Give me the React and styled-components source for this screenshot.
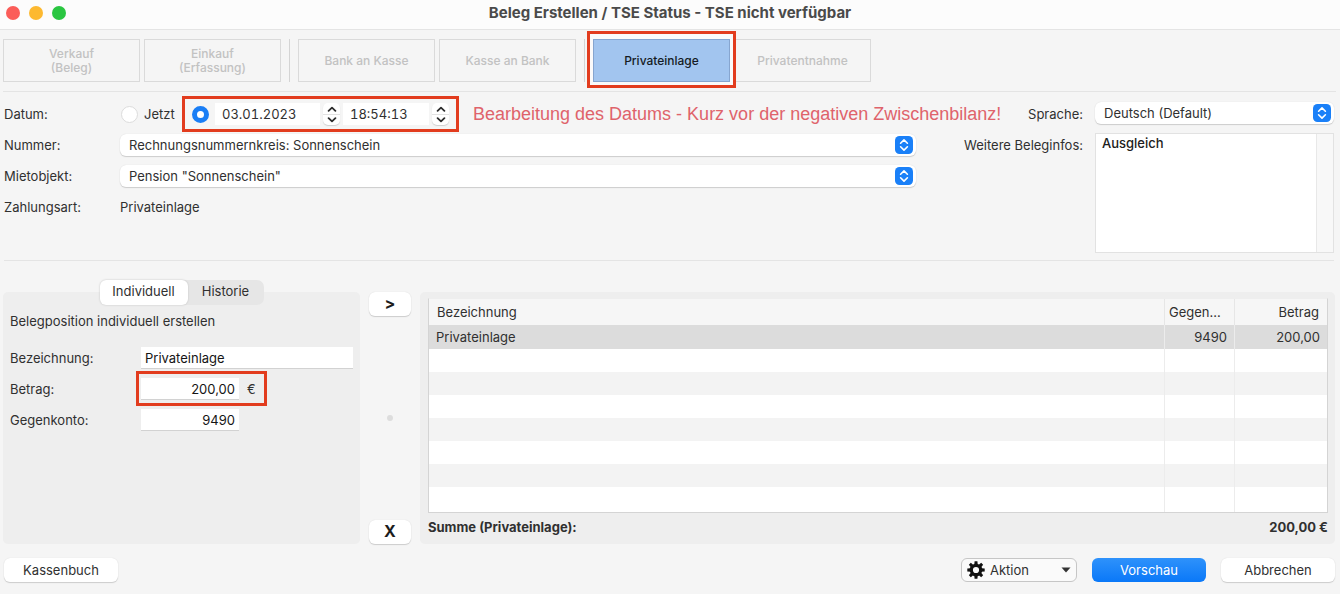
// vendor
import React, { useState } from 'react';
import styled, { createGlobalStyle, css } from 'styled-components';

// +++++++++ CSS +++++++++

const GlobalStyle = createGlobalStyle`
	* {
		box-sizing: border-box;
	}

	body {
		margin: 0;
		background: #f5f5f5;
		color: #303030;
		font: 13px/16px Inter, "Liberation Sans", sans-serif;
	}

	button, input, select, textarea {
		margin: 0;
		font: inherit;
		color: inherit;
	}
`;

const Window = styled.main`
	display: flex;
	flex-direction: column;
	min-height: 100vh;
`;

const TitleBar = styled.header`
	display: grid;
	grid-template-columns: 1fr auto 1fr;
	align-items: center;
	height: 30px;
	padding: 0 6px 4px;
	background: #fcfcfc;
	border-bottom: 1px solid #e4e4e4;
`;

const Lights = styled.div`
	display: flex;
	gap: 9px;
`;

const Light = styled.button`
	width: 14px;
	height: 14px;
	padding: 0;
	border: 0;
	border-radius: 50%;
	background: ${props => props.$color};
`;

const Title = styled.h1`
	margin: 0;
	font-size: 15px;
	line-height: 20px;
	font-weight: 700;
	color: #4a4a4a;
`;

const Toolbar = styled.nav`
	display: flex;
	gap: 4px;
	margin: 0 4px 0 3px;
	padding: 9px 0;
	border-bottom: 1px solid #e4e4e4;
`;

const Divider = styled.span`
	width: 1px;
	margin: 0 4px;
	background: #d4d4d4;
`;

const ModeButton = styled.button`
	width: 137px;
	height: 43px;
	padding: 0;
	border: 1px solid #dadada;
	background: #f5f5f5;
	font-size: 12px;
	line-height: 14px;
	font-weight: 500;
	color: #c2c2c2;
	white-space: pre-line;

	${props => props.$active && css`
		position: relative;
		border-color: #86a5cf;
		background: #a2c5ef;
		color: #151b24;
	`}
`;

/* red frame drawn over the marked control */
const Marked = styled.div`
	position: relative;
	display: flex;
	align-items: center;

	&::before {
		content: "";
		position: absolute;
		inset: ${props => props.$inset};
		border: 3px solid #e23c1e;
		background: ${props => props.$fill || 'transparent'};
		pointer-events: none;
	}
`;

const Form = styled.section`
	display: flex;
	margin: 0 6px 0 4px;
	padding: 10px 0 7px;
	border-bottom: 1px solid #e4e4e4;
`;

const Fields = styled.div`
	flex: 1;
	display: grid;
	grid-template-columns: 116px 1fr;
	grid-auto-rows: 24px;
	row-gap: 7px;
	align-items: center;
	align-content: start;
	min-width: 0;
`;

const Infos = styled.div`
	width: 418px;
	display: grid;
	grid-template-columns: 167px 239px;
	grid-template-rows: 24px 120px;
	gap: 7px 12px;
`;

const InfoLabel = styled.label`
	padding-top: 4px;
	text-align: right;
`;

const DateRow = styled.div`
	display: flex;
	align-items: center;
	gap: 12px;
	min-width: 0;
	white-space: nowrap;
`;

const Choice = styled.label`
	flex: none;
	display: flex;
	align-items: center;
	gap: 6px;
	width: 60px;
	padding-left: 1px;
`;

const Radio = styled.input`
	appearance: none;
	flex: none;
	width: 17px;
	height: 17px;
	border: 1px solid #dcdcdc;
	border-radius: 50%;
	background: #fff;

	&:checked {
		border: 5px solid #1a7ef5;
	}
`;

const DateTime = styled(Marked)`
	flex: none;
	width: 257px;
	gap: 3px;
`;

const StampInput = styled.input`
	position: relative;
	width: ${props => props.$width};
	height: 22px;
	padding: 0 7px;
	border: 0;
	background: #fff;
	font-variant-numeric: tabular-nums;

	${Radio} + & {
		margin-left: 3px;
	}
`;

const Steps = styled.span`
	position: relative;
	flex: none;
	display: flex;
	flex-direction: column;
	width: 17px;
	height: 22px;
	border-radius: 5px;
	background: #fff;
	box-shadow: 0 1px 1px #cfcfcf;
`;

const Step = styled.button`
	display: flex;
	align-items: center;
	justify-content: center;
	height: 11px;
	padding: 0;
	border: 0;
	background: none;

	& + & {
		border-top: 1px solid #e2e2e2;
	}
`;

const Note = styled.span`
	margin-left: 12px;
	font-family: "Liberation Sans", Arial, sans-serif;
	font-size: 18px;
	line-height: 22px;
	color: #df636b;
`;

const SelectBox = styled.span`
	position: relative;
	display: block;

	svg {
		position: absolute;
		top: 2px;
		right: 3px;
		pointer-events: none;
	}
`;

const Select = styled.select`
	appearance: none;
	display: block;
	width: 100%;
	height: 22px;
	padding: 0 28px 0 9px;
	border: 0;
	border-radius: 6px;
	background: #fff;
	box-shadow: 0 1px 1px #cccccc, 0 0 1px #d4d4d4;
`;

const InfoText = styled.textarea`
	width: 100%;
	height: 120px;
	padding: 1px 6px;
	border: 1px solid #e2e2e2;
	background: linear-gradient(to left, #f8f8f8 16px, #e8e8e8 16px, #e8e8e8 17px, #fff 17px);
	color: #202020;
	font-weight: 500;
	resize: none;
`;

const Workspace = styled.section`
	display: grid;
	grid-template-columns: 357px 42px 1fr;
	gap: 9px;
	margin: 31px 5px 0 3px;
`;

const Editor = styled.section`
	display: flex;
	flex-direction: column;
	align-items: stretch;
	height: 252px;
	padding: 0 7px;
	border-radius: 5px;
	background: #eeeeee;
`;

const Tabs = styled.div`
	display: flex;
	align-self: center;
	height: 25px;
	margin-top: -12px;
	border-radius: 7px;
	background: #e6e6e6;
`;

const Tab = styled.button`
	width: ${props => props.$width};
	padding: 0 0 3px;
	border: 0;
	border-radius: 6px;
	background: none;

	&[aria-selected="true"] {
		background: #fff;
		box-shadow: 0 0 2px #bdbdbd;
	}
`;

const Intro = styled.p`
	margin: 8px 0 18px;
`;

const Lines = styled.div`
	display: grid;
	grid-template-columns: 131px 1fr;
	grid-auto-rows: 22px;
	row-gap: 9px;
	align-items: center;
`;

const TextInput = styled.input`
	position: relative;
	width: ${props => props.$width || '100%'};
	height: 22px;
	padding: 0 4px;
	border: 0;
	border-bottom: 1px solid #d2d2d2;
	background: #fff;
	color: #151515;
	text-align: ${props => props.$align || 'left'};
`;

const Amount = styled(Marked)`
	width: 120px;
	gap: 8px;
`;

const Transfer = styled.div`
	display: flex;
	flex-direction: column;
	align-items: center;
	justify-content: space-between;
`;

const Grip = styled.span`
	width: 6px;
	height: 6px;
	border-radius: 50%;
	background: #dddddd;
`;

const PushButton = styled.button`
	display: flex;
	align-items: center;
	justify-content: center;
	width: 114px;
	height: 24px;
	padding: 0;
	border: 0;
	border-radius: 6px;
	background: #fff;
	box-shadow: 0 1px 1px #cccccc, 0 0 1px #d4d4d4;

	${props => props.$primary && css`
		background: linear-gradient(#2e92fb, #0a78f8);
		box-shadow: none;
		color: #fff;
	`}
`;

const MoveButton = styled(PushButton)`
	width: 42px;
	padding-bottom: 2px;
	font-size: 16px;
	font-weight: 700;
	color: #1c1c1c;
`;

const Positions = styled.section`
	min-width: 0;
	height: 252px;
	padding: 6px 7px 0 8px;
	border-radius: 5px;
	background: #eeeeee;
`;

const Table = styled.table`
	width: 100%;
	table-layout: fixed;
	border-spacing: 0;
	border: 1px solid #d4d4d4;
	border-top-color: #eeeeee;
	background: #fff;
`;

const Row = styled.tr`
	height: 23px;

	&:nth-child(odd) {
		background: #f3f3f3;
	}

	&:first-child {
		height: 24px;
		background: #dcdcdc;
	}

	&:last-child {
		height: 25px;
	}
`;

const HeadCell = styled.th`
	width: ${props => props.$width || 'auto'};
	height: 26px;
	padding: 0 8px;
	padding-left: ${props => (props.$narrow ? '4px' : '8px')};
	border-left: ${props => (props.$width ? '1px solid #e6e6e6' : '0')};
	background: #f6f6f6;
	font-weight: 400;
	text-align: ${props => props.$align || 'left'};
`;

const Cell = styled.td`
	padding: 0 7px;
	border-left: ${props => (props.$align ? '1px solid #ececec' : '0')};
	text-align: ${props => props.$align || 'left'};
`;

const Total = styled.p`
	display: flex;
	justify-content: space-between;
	margin: 5px 0 0;
	font-weight: 700;
	line-height: 18px;
`;

const Footer = styled.footer`
	display: flex;
	gap: 15px;
	margin: 14px 5px 12px 4px;
`;

const Spacer = styled.span`
	flex: 1;
`;

const ActionButton = styled(PushButton)`
	width: 116px;
	justify-content: flex-start;
	gap: 5px;
	padding: 0 5px;
	border: 1px solid #c6c6c6;
	background: #fafafa;
	box-shadow: none;

	svg:last-child {
		margin-left: auto;
	}
`;

// +++++++++ ICONS +++++++++

const ChevronsIcon = () => (
	<svg width="18" height="18" viewBox="0 0 18 18" fill="none" aria-hidden="true">
		<rect width="18" height="18" rx="4.5" fill="#1a80f8" />
		<path d="M5.6 7.2 9 3.9l3.4 3.3M5.6 10.8 9 14.1l3.4-3.3" stroke="#fff" strokeWidth="1.6" strokeLinecap="round" strokeLinejoin="round" />
	</svg>
);

const StepIcon = ({ down }) => (
	<svg width="10" height="6" viewBox="0 0 10 6" fill="none" aria-hidden="true">
		<path d={down ? 'M1.6 1.2 5 4.4l3.4-3.2' : 'M1.6 4.8 5 1.6l3.4 3.2'} stroke="#2c2c2c" strokeWidth="1.8" strokeLinecap="round" strokeLinejoin="round" />
	</svg>
);

const GearIcon = () => (
	<svg width="18" height="18" viewBox="0 0 18 18" aria-hidden="true">
		<circle cx="9" cy="9" r="4.7" fill="none" stroke="#111" strokeWidth="3.2" />
		{[0, 45, 90, 135, 180, 225, 270, 315].map(angle => (
			<path key={angle} d="M7.2 4 7.6.3h2.8L10.8 4z" fill="#111" transform={`rotate(${angle} 9 9)`} />
		))}
	</svg>
);

const ArrowIcon = () => (
	<svg width="10" height="6" viewBox="0 0 10 6" aria-hidden="true">
		<path d="M.5.5h9L5 5.5z" fill="#333" />
	</svg>
);

// +++++++++ COMPONENT +++++++++

const emptyRows = [1, 2, 3, 4, 5, 6, 7];

const Picker = ({ id, option }) => (
	<SelectBox>
		<Select id={id}>
			<option>{option}</option>
		</Select>
		<ChevronsIcon />
	</SelectBox>
);

const Stepper = ({ name }) => (
	<Steps>
		<Step type="button" aria-label={`${name} erhöhen`}><StepIcon /></Step>
		<Step type="button" aria-label={`${name} verringern`}><StepIcon down /></Step>
	</Steps>
);

const App = () => {
	const [tab, setTab] = useState('individuell');

	return (
		<Window>
			<GlobalStyle />
			<TitleBar>
				<Lights>
					<Light type="button" aria-label="Schließen" $color="#fb5d59" />
					<Light type="button" aria-label="Minimieren" $color="#fdb930" />
					<Light type="button" aria-label="Maximieren" $color="#2ac641" />
				</Lights>
				<Title>Beleg Erstellen / TSE Status - TSE nicht verfügbar</Title>
			</TitleBar>

			<Toolbar>
				<ModeButton disabled>{'Verkauf\n(Beleg)'}</ModeButton>
				<ModeButton disabled>{'Einkauf\n(Erfassung)'}</ModeButton>
				<Divider />
				<ModeButton disabled>Bank an Kasse</ModeButton>
				<ModeButton disabled>Kasse an Bank</ModeButton>
				<Divider />
				<Marked $inset="-8px -6px -6px" $fill="#fafafa">
					<ModeButton type="button" $active>Privateinlage</ModeButton>
				</Marked>
				<ModeButton disabled>Privatentnahme</ModeButton>
			</Toolbar>

			<Form>
				<Fields>
					<span>Datum:</span>
					<DateRow>
						<Choice>
							<Radio type="radio" name="zeit" />
							Jetzt
						</Choice>
						<DateTime $inset="-7px -10px">
							<Radio type="radio" name="zeit" defaultChecked aria-label="Eigenes Datum" />
							<StampInput $width="105px" defaultValue="03.01.2023" aria-label="Datum" />
							<Stepper name="Datum" />
							<StampInput $width="86px" defaultValue="18:54:13" aria-label="Uhrzeit" />
							<Stepper name="Uhrzeit" />
						</DateTime>
						<Note>Bearbeitung des Datums - Kurz vor der negativen Zwischenbilanz!</Note>
					</DateRow>
					<label htmlFor="nummer">Nummer:</label>
					<Picker id="nummer" option="Rechnungsnummernkreis: Sonnenschein" />
					<label htmlFor="mietobjekt">Mietobjekt:</label>
					<Picker id="mietobjekt" option={'Pension "Sonnenschein"'} />
					<span>Zahlungsart:</span>
					<span>Privateinlage</span>
				</Fields>
				<Infos>
					<InfoLabel htmlFor="sprache">Sprache:</InfoLabel>
					<Picker id="sprache" option="Deutsch (Default)" />
					<InfoLabel htmlFor="infos">Weitere Beleginfos:</InfoLabel>
					<InfoText id="infos" defaultValue="Ausgleich" />
				</Infos>
			</Form>

			<Workspace>
				<Editor>
					<Tabs role="tablist">
						<Tab type="button" role="tab" $width="88px" aria-selected={tab === 'individuell'} onClick={() => setTab('individuell')}>
							Individuell
						</Tab>
						<Tab type="button" role="tab" $width="76px" aria-selected={tab === 'historie'} onClick={() => setTab('historie')}>
							Historie
						</Tab>
					</Tabs>
					<Intro>Belegposition individuell erstellen</Intro>
					<Lines>
						<label htmlFor="bezeichnung">Bezeichnung:</label>
						<TextInput id="bezeichnung" defaultValue="Privateinlage" />
						<label htmlFor="betrag">Betrag:</label>
						<Amount $inset="-7px -6px -6px -5px">
							<TextInput id="betrag" $width="98px" $align="right" defaultValue="200,00" />
							€
						</Amount>
						<label htmlFor="gegenkonto">Gegenkonto:</label>
						<TextInput id="gegenkonto" $width="98px" $align="right" defaultValue="9490" />
					</Lines>
				</Editor>

				<Transfer>
					<MoveButton type="button" aria-label="Hinzufügen">&gt;</MoveButton>
					<Grip />
					<MoveButton type="button" aria-label="Entfernen">X</MoveButton>
				</Transfer>

				<Positions>
					<Table>
						<thead>
							<tr>
								<HeadCell>Bezeichnung</HeadCell>
								<HeadCell $width="70px" $narrow>Gegen...</HeadCell>
								<HeadCell $width="93px" $align="right">Betrag</HeadCell>
							</tr>
						</thead>
						<tbody>
							<Row>
								<Cell>Privateinlage</Cell>
								<Cell $align="right">9490</Cell>
								<Cell $align="right">200,00</Cell>
							</Row>
							{emptyRows.map(row => (
								<Row key={row}>
									<Cell />
									<Cell $align="right" />
									<Cell $align="right" />
								</Row>
							))}
						</tbody>
					</Table>
					<Total>
						<span>Summe (Privateinlage):</span>
						<span>200,00 €</span>
					</Total>
				</Positions>
			</Workspace>

			<Footer>
				<PushButton type="button">Kassenbuch</PushButton>
				<Spacer />
				<ActionButton type="button">
					<GearIcon />
					Aktion
					<ArrowIcon />
				</ActionButton>
				<PushButton type="button" $primary>Vorschau</PushButton>
				<PushButton type="button">Abbrechen</PushButton>
			</Footer>
		</Window>
	);
};

export default App;
